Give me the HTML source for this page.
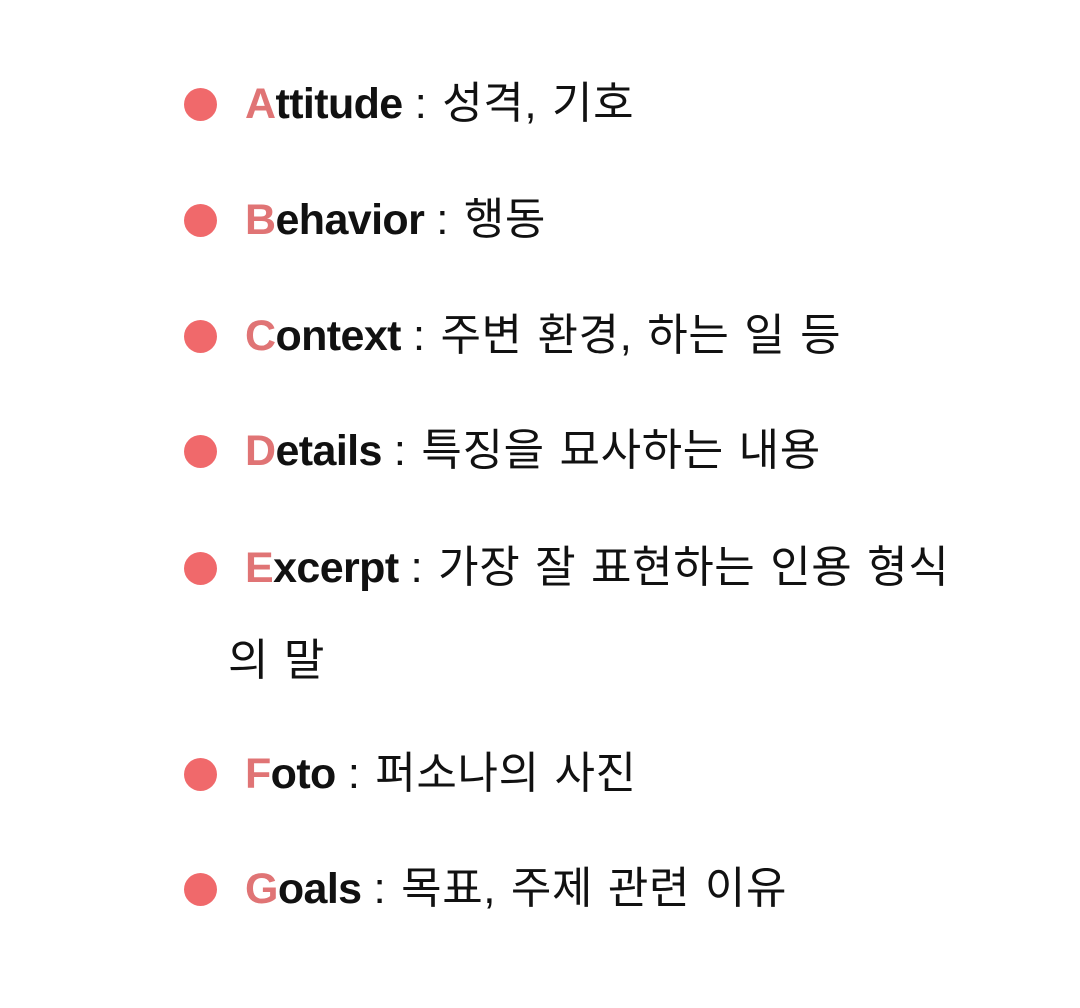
<!DOCTYPE html>
<html><head><meta charset="utf-8"><style>
html,body{margin:0;padding:0;background:#fff;width:1080px;height:1008px;overflow:hidden}
.l{position:absolute;left:245px;height:50px;line-height:50px;white-space:nowrap;font-family:"Liberation Sans","Noto Sans CJK KR",sans-serif;font-size:43px;color:#111}
.l b{font-weight:bold;letter-spacing:-0.6px}
.l b i{font-style:normal;color:#e07475}
.k{font-family:"Liberation Sans","Noto Sans CJK KR",sans-serif;font-weight:normal;font-size:44px;letter-spacing:0.6px;word-spacing:2px}
.d{position:absolute;left:184px;width:33px;height:33px;border-radius:50%;background:#f0696b}
</style></head><body>
<div class="d" style="top:88px"></div><div class="l" style="top:79px"><b><i>A</i>ttitude</b> <span class="k">: 성격, 기호</span></div>
<div class="d" style="top:204px"></div><div class="l" style="top:195px"><b><i>B</i>ehavior</b> <span class="k">: 행동</span></div>
<div class="d" style="top:320px"></div><div class="l" style="top:311px"><b><i>C</i>ontext</b> <span class="k">: 주변 환경, 하는 일 등</span></div>
<div class="d" style="top:435px"></div><div class="l" style="top:426px"><b><i>D</i>etails</b> <span class="k">: 특징을 묘사하는 내용</span></div>
<div class="d" style="top:552px"></div><div class="l" style="top:543px"><b><i>E</i>xcerpt</b> <span class="k">: 가장 잘 표현하는 인용 형식</span></div>
<div class="l" style="top:636px;left:228px"><span class="k">의 말</span></div>
<div class="d" style="top:758px"></div><div class="l" style="top:749px"><b><i>F</i>oto</b> <span class="k">: 퍼소나의 사진</span></div>
<div class="d" style="top:873px"></div><div class="l" style="top:864px"><b><i>G</i>oals</b> <span class="k">: 목표, 주제 관련 이유</span></div>
</body></html>
